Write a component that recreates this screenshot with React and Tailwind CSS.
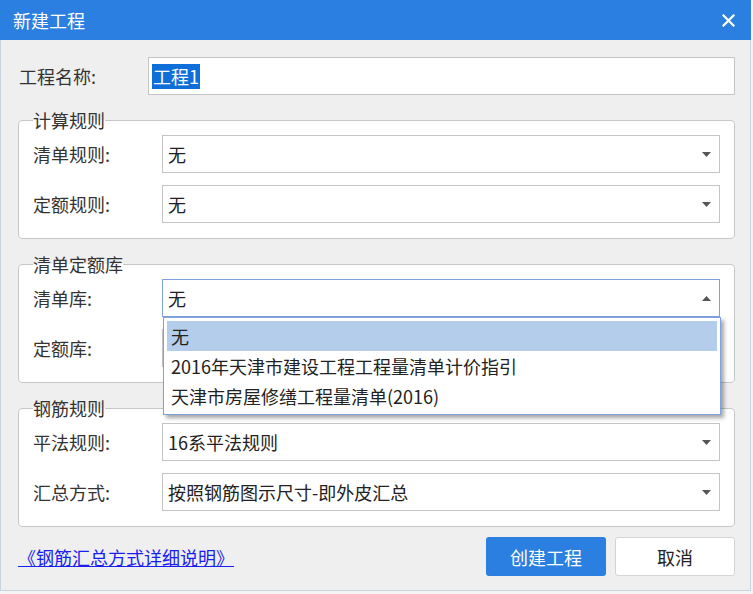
import React from 'react';

const FONT = { fontFamily: '"Microsoft YaHei", "Noto Sans CJK SC", "Noto Sans", sans-serif' };

const Arrow = ({ up }) => (
  <svg width="9" height="5" viewBox="0 0 9 5" className="shrink-0">
    {up ? <path d="M0 5 L4.5 0 L9 5 Z" fill="#555" /> : <path d="M0 0 L9 0 L4.5 5 Z" fill="#555" />}
  </svg>
);

const Select = ({ value, open }) => (
  <div
    className={
      'flex-1 h-[38px] flex items-center justify-between pl-[5px] pr-[8px] bg-white border ' +
      (open ? 'border-[#7ea2db]' : 'border-[#c4c4c4]')
    }
  >
    <span className="text-[18px] text-[#222] leading-none">{value}</span>
    <Arrow up={open} />
  </div>
);

const Row = ({ label, children }) => (
  <div className="flex items-center">
    <div className="w-[129px] text-[18px] text-[#333] leading-none">{label}</div>
    {children}
  </div>
);

const Group = ({ title, children }) => (
  <fieldset className="border border-[#c6c6c6] rounded-[4px] bg-white px-[14px] pt-[5px] pb-[15px]">
    <legend className="text-[18px] text-[#333] leading-[20px]">{title}</legend>
    <div className="flex flex-col gap-[12px]">{children}</div>
  </fieldset>
);

const options = ['无', '2016年天津市建设工程工程量清单计价指引', '天津市房屋修缮工程量清单(2016)'];

export default function App() {
  return (
    <div className="w-[753px] h-[594px] bg-[#f4f4f4] overflow-hidden" style={FONT}>
      <div className="w-[751px] h-[591px] flex flex-col bg-[#efefef] border-x border-b border-[#c9d3df]">
        {/* title bar */}
        <div className="h-[40px] -mx-px bg-[#2b7fe0] flex items-center justify-between pl-[13px] pr-[16px]">
          <span className="text-[18px] text-white leading-none">新建工程</span>
          <svg width="13" height="13" viewBox="0 0 13 13">
            <path d="M1.5 1.5 L11.5 11.5 M11.5 1.5 L1.5 11.5" stroke="#fff" strokeWidth="2.2" strokeLinecap="square" />
          </svg>
        </div>

        <div className="flex flex-col pl-[17px] pr-[15px] pt-[17px]">
          {/* project name */}
          <div className="flex items-center">
            <div className="w-[130px] pl-[1px] text-[18px] text-[#333] leading-none">工程名称:</div>
            <div className="flex-1 h-[38px] bg-white border border-[#c4c4c4] flex items-center pl-[3px]">
              <span className="bg-[#0f6fd8] text-white text-[18px] leading-[25px] px-[1px]">工程1</span>
            </div>
          </div>

          <div className="mt-[15px]">
            <Group title="计算规则">
              <Row label="清单规则:"><Select value="无" /></Row>
              <Row label="定额规则:"><Select value="无" /></Row>
            </Group>
          </div>

          <div className="mt-[15px]">
            <Group title="清单定额库">
              <Row label="清单库:">
                <div className="flex-1 relative flex">
                  <Select value="无" open />
                  <div className="absolute left-[1px] -right-[1px] top-[38px] z-10 bg-white border border-[#7ea2db] p-[3px] shadow-[3px_3px_4px_rgba(0,0,0,0.35)]">
                    {options.map((o, i) => (
                      <div
                        key={o}
                        className={
                          'h-[30px] flex items-center pl-[4px] text-[18px] text-[#222] leading-none ' +
                          (i === 0 ? 'bg-[#b3cdea]' : '')
                        }
                      >
                        {o}
                      </div>
                    ))}
                  </div>
                </div>
              </Row>
              {/* covered by the open list */}
              <Row label="定额库:"><Select value="" /></Row>
            </Group>
          </div>

          <div className="mt-[15px]">
            <Group title="钢筋规则">
              <Row label="平法规则:"><Select value="16系平法规则" /></Row>
              <Row label="汇总方式:"><Select value="按照钢筋图示尺寸-即外皮汇总" /></Row>
            </Group>
          </div>

          {/* footer */}
          <div className="mt-[10px] flex items-center justify-between">
            <a className="text-[18px] text-[#1a1ef0] underline leading-none cursor-pointer">《钢筋汇总方式详细说明》</a>
            <div className="flex gap-[9px]">
              <button className="w-[120px] h-[39px] rounded-[3px] bg-[#2b7fe0] text-white text-[18px] leading-none">创建工程</button>
              <button className="w-[120px] h-[39px] rounded-[3px] bg-white border border-[#d4d4d4] text-[#222] text-[18px] leading-none">取消</button>
            </div>
          </div>
        </div>
      </div>
    </div>
  );
}
